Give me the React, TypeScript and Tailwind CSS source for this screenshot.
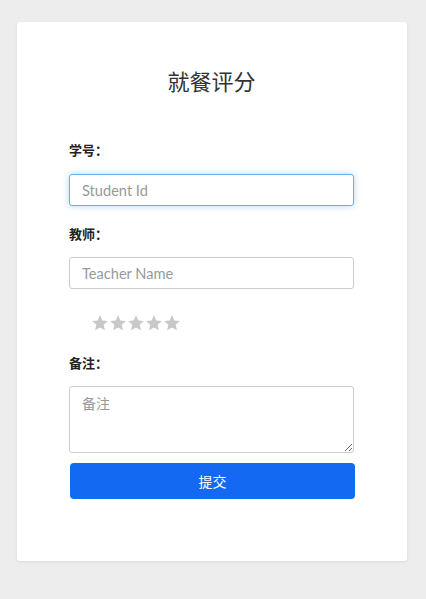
import React from 'react';

const Star: React.FC = () => (
  <svg viewBox="0 0 24 24" className="h-[18px] w-[18px]" fill="#c8c8c8">
    <path d="M12 1.8l3.1 6.9 7.4.7-5.6 5 1.7 7.4L12 17.9l-6.6 3.9 1.7-7.4-5.6-5 7.4-.7z" />
  </svg>
);

const Label: React.FC<{ text: string }> = ({ text }) => (
  <label className="block text-[13px] font-bold text-[#222] leading-[18px]">{text}</label>
);

export default function App() {
  return (
    <div
      className="min-h-[599px] bg-[#ededed] pl-[17px] pr-[19px] pt-[22px] pb-[39px]"
      style={{ fontFamily: '"Lato", "Noto Sans CJK SC", sans-serif' }}
    >
      <div className="rounded-[3px] bg-white pl-[52px] pr-[53px] pt-[44px] pb-[62px] shadow-[0_1px_3px_rgba(0,0,0,0.08)]">
        <h1 className="text-center text-[22px] leading-[32px] text-[#333]">就餐评分</h1>

        <div className="mt-[43px]">
          <Label text="学号：" />
          <input
            className="mt-[15px] block h-[32px] w-full rounded-[3px] border border-[#66afe9] px-[12px] text-[14.6px] text-[#555] placeholder:text-[#999] outline-none shadow-[0_0_6px_rgba(102,175,233,0.5)]"
            placeholder="Student Id"
          />
        </div>

        <div className="mt-[19px]">
          <Label text="教师：" />
          <input
            className="mt-[14px] block h-[32px] w-full rounded-[3px] border border-[#ccc] px-[12px] text-[14.6px] text-[#555] placeholder:text-[#999] outline-none"
            placeholder="Teacher Name"
          />
        </div>

        <div className="mt-[25px] flex pl-[22px]">
          <Star />
          <Star />
          <Star />
          <Star />
          <Star />
        </div>

        <div className="mt-[22px]">
          <Label text="备注：" />
          <textarea
            className="mt-[14px] block h-[67px] w-full rounded-[3px] border border-[#ccc] px-[12px] py-[6px] text-[14px] text-[#555] placeholder:text-[#999] outline-none"
            placeholder="备注"
          />
        </div>

        <button className="mt-[10px] ml-px block h-[36px] w-full rounded-[4px] bg-[#1469f2] text-[14px] text-white">
          提交
        </button>
      </div>
    </div>
  );
}
